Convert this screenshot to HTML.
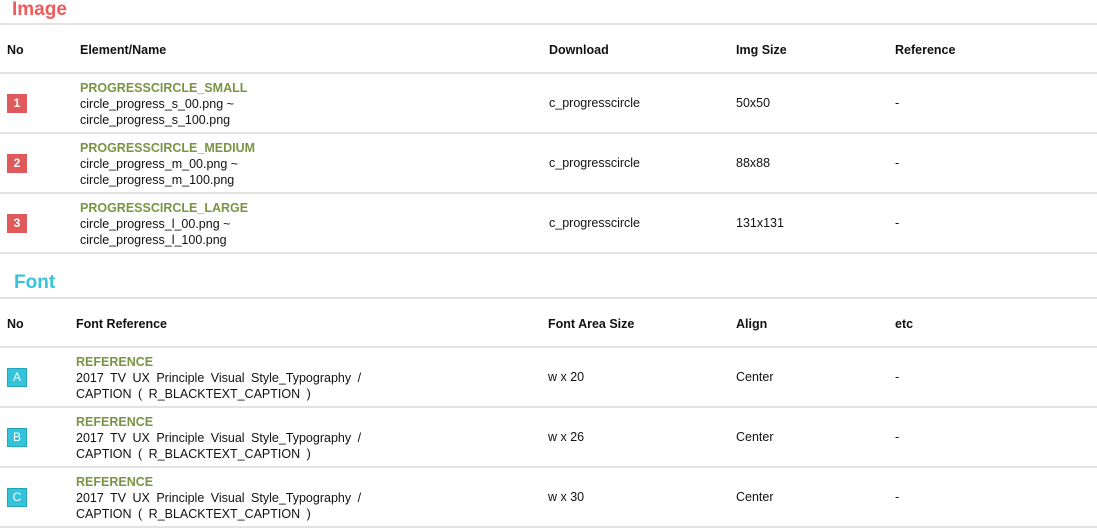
<!DOCTYPE html>
<html><head><meta charset="utf-8"><style>
*{margin:0;padding:0;box-sizing:border-box}
body{width:1097px;height:530px;background:#fff;position:relative;overflow:hidden;font-family:"Liberation Sans",Arial,sans-serif;font-size:12.5px;color:#111}
.a{position:absolute;white-space:nowrap}
.ln{position:absolute;left:0;width:1097px;height:2px;background:#e3e3e3}
.t{font-weight:bold;font-size:19px;line-height:20px}
.h{font-weight:bold;font-size:12.5px}
.g{color:#7b9444;font-weight:bold}
.b{position:absolute;left:7px;width:20px;height:19px;color:#fff;font-size:12px;line-height:19px;text-align:center}
.r{background:#e05a5c;font-weight:bold}
.c{background:#33c4db;border:1px solid #23a6bb;line-height:17px}
.m{line-height:16px}
.w{word-spacing:3px}
</style></head><body>
<div class="a t" style="left:12px;top:0px;color:#f05a5a">Image</div>
<div class="ln" style="top:23px"></div>
<div class="a h" style="left:7px;top:43px">No</div>
<div class="a h" style="left:80px;top:43px">Element/Name</div>
<div class="a h" style="left:549px;top:43px">Download</div>
<div class="a h" style="left:736px;top:43px">Img Size</div>
<div class="a h" style="left:895px;top:43px">Reference</div>
<div class="ln" style="top:72px"></div>

<div class="b r" style="top:94px">1</div>
<div class="a m" style="left:80px;top:80px"><span class="g">PROGRESSCIRCLE_SMALL</span><br>circle_progress_s_00.png ~<br>circle_progress_s_100.png</div>
<div class="a" style="left:549px;top:96px">c_progresscircle</div>
<div class="a" style="left:736px;top:96px">50x50</div>
<div class="a" style="left:895px;top:96px">-</div>
<div class="ln" style="top:132px"></div>

<div class="b r" style="top:154px">2</div>
<div class="a m" style="left:80px;top:140px"><span class="g">PROGRESSCIRCLE_MEDIUM</span><br>circle_progress_m_00.png ~<br>circle_progress_m_100.png</div>
<div class="a" style="left:549px;top:156px">c_progresscircle</div>
<div class="a" style="left:736px;top:156px">88x88</div>
<div class="a" style="left:895px;top:156px">-</div>
<div class="ln" style="top:192px"></div>

<div class="b r" style="top:214px">3</div>
<div class="a m" style="left:80px;top:200px"><span class="g">PROGRESSCIRCLE_LARGE</span><br>circle_progress_l_00.png ~<br>circle_progress_l_100.png</div>
<div class="a" style="left:549px;top:216px">c_progresscircle</div>
<div class="a" style="left:736px;top:216px">131x131</div>
<div class="a" style="left:895px;top:216px">-</div>
<div class="ln" style="top:252px"></div>

<div class="a t" style="left:14px;top:273px;color:#36c5d8">Font</div>
<div class="ln" style="top:297px"></div>
<div class="a h" style="left:7px;top:317px">No</div>
<div class="a h" style="left:76px;top:317px">Font Reference</div>
<div class="a h" style="left:548px;top:317px">Font Area Size</div>
<div class="a h" style="left:736px;top:317px">Align</div>
<div class="a h" style="left:895px;top:317px">etc</div>
<div class="ln" style="top:346px"></div>

<div class="b c" style="top:368px">A</div>
<div class="a m" style="left:76px;top:354px"><span class="g">REFERENCE</span><br><span class="w">2017 TV UX Principle Visual Style_Typography /</span><br><span class="w">CAPTION ( R_BLACKTEXT_CAPTION )</span></div>
<div class="a" style="left:548px;top:370px">w x 20</div>
<div class="a" style="left:736px;top:370px">Center</div>
<div class="a" style="left:895px;top:370px">-</div>
<div class="ln" style="top:406px"></div>

<div class="b c" style="top:428px">B</div>
<div class="a m" style="left:76px;top:414px"><span class="g">REFERENCE</span><br><span class="w">2017 TV UX Principle Visual Style_Typography /</span><br><span class="w">CAPTION ( R_BLACKTEXT_CAPTION )</span></div>
<div class="a" style="left:548px;top:430px">w x 26</div>
<div class="a" style="left:736px;top:430px">Center</div>
<div class="a" style="left:895px;top:430px">-</div>
<div class="ln" style="top:466px"></div>

<div class="b c" style="top:488px">C</div>
<div class="a m" style="left:76px;top:474px"><span class="g">REFERENCE</span><br><span class="w">2017 TV UX Principle Visual Style_Typography /</span><br><span class="w">CAPTION ( R_BLACKTEXT_CAPTION )</span></div>
<div class="a" style="left:548px;top:490px">w x 30</div>
<div class="a" style="left:736px;top:490px">Center</div>
<div class="a" style="left:895px;top:490px">-</div>
<div class="ln" style="top:526px"></div>
</body></html>
